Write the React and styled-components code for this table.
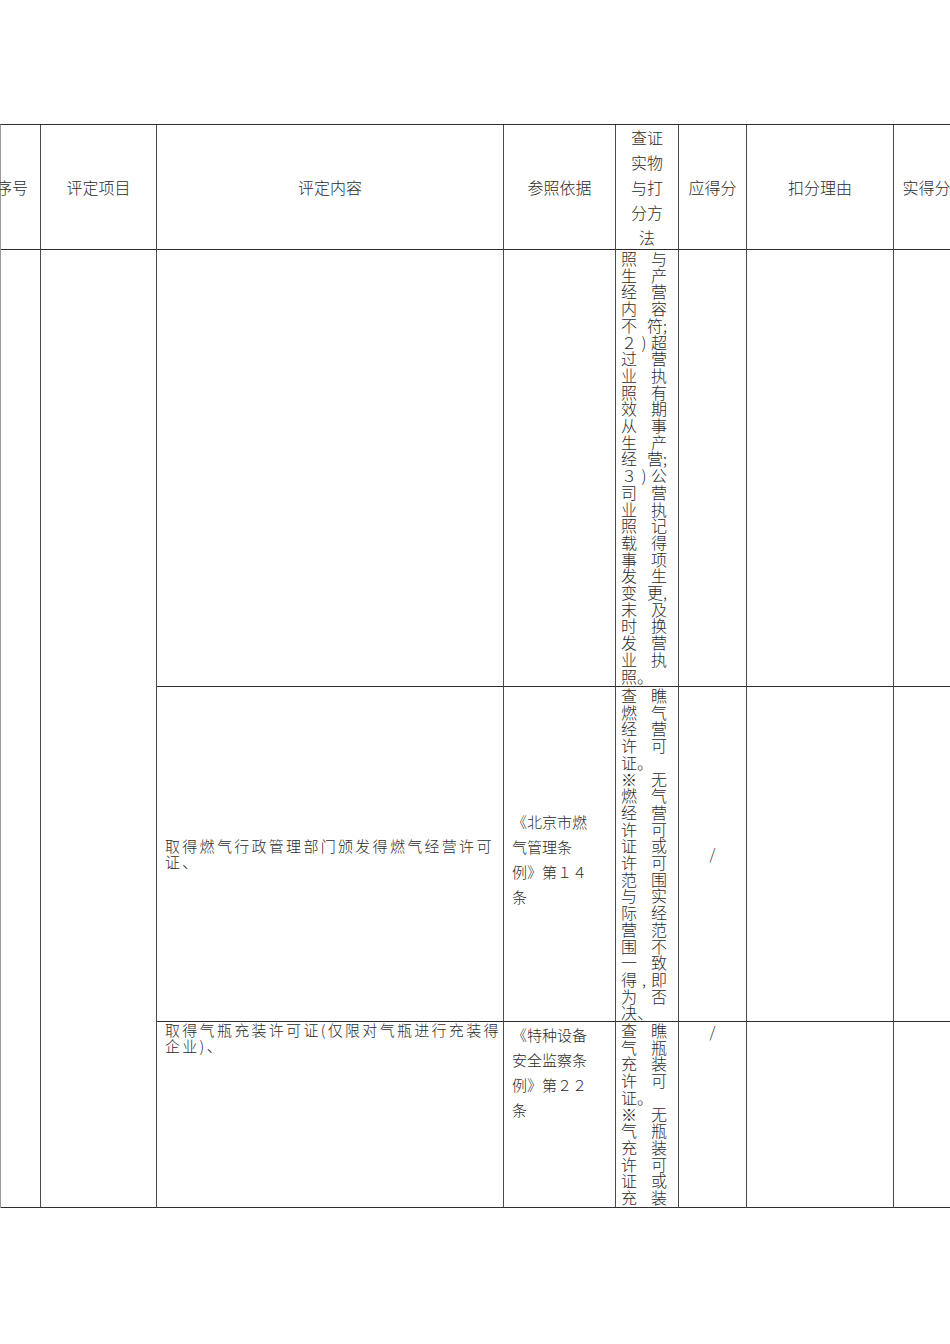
import React from "react";
import styled, { createGlobalStyle } from "styled-components";

const GlobalStyle = createGlobalStyle`
  html, body {
    margin: 0;
    padding: 0;
    background: #fff;
  }
  body {
    font-family: "Noto Sans CJK SC", "Noto Sans", sans-serif;
    font-weight: 300;
    color: #2b2b2b;
  }
`;

const Page = styled.div`
  width: 950px;
  height: 1344px;
  overflow: hidden;
  padding-top: 124px;
  box-sizing: border-box;
`;

const Sheet = styled.div`
  display: grid;
  grid-template-columns: 40px 116px 347px 112px 63px 68px 147px 66px;
  grid-template-rows: 125px 437px 335px 186px;
  width: max-content;
  border-top: 1px solid #2e2e2e;
  border-left: 1px solid #9a9a9a;
`;

const Cell = styled.div`
  box-sizing: border-box;
  min-width: 0;
  display: flex;
  align-items: ${(p) => p.$align || "flex-start"};
  justify-content: ${(p) => p.$justify || "flex-start"};
  grid-row: ${(p) => (p.$span ? `span ${p.$span}` : "auto")};
  border-right: 1px solid #4a4a4a;
  border-bottom: 1px solid #2e2e2e;
`;

const HeadCell = styled(Cell)`
  align-items: center;
  justify-content: ${(p) => p.$justify || "center"};
  padding-right: ${(p) => p.$padRight || 0}px;
  font-size: 16px;
  line-height: 25px;
  text-align: center;
  white-space: nowrap;
`;

const ItemText = styled.div`
  width: 100%;
  padding: 0 0 0 8px;
  font-size: 15px;
  letter-spacing: 2.3px;
  line-height: 16px;
`;

const RefText = styled.div`
  width: 100%;
  padding: ${(p) => (p.$middle ? "10px" : "0")} 22px 0 8px;
  font-size: 15px;
  line-height: 25px;
`;

const CheckText = styled.div`
  width: 100%;
  padding: 0 11px 0 5px;
  font-size: 16px;
  line-height: 16.7px;
`;

const CheckLine = styled.div`
  display: flex;
  justify-content: space-between;
  white-space: nowrap;
`;

const Score = styled.div`
  width: 100%;
  text-align: center;
  font-size: 15px;
  line-height: 20px;
`;

const rows = [
  {
    item: "",
    ref: "",
    score: "",
    middle: false,
    check: [
      ["照", "与"], ["生", "产"], ["经", "营"], ["内", "容"], ["不", "符;"],
      ["２", ")", "超"], ["过", "营"], ["业", "执"], ["照", "有"], ["效", "期"],
      ["从", "事"], ["生", "产"], ["经", "营;"], ["３", ")", "公"], ["司", "营"],
      ["业", "执"], ["照", "记"], ["载", "得"], ["事", "项"], ["发", "生"],
      ["变", "更,"], ["末", "及"], ["时", "换"], ["发", "营"], ["业", "执"],
      ["照。"],
    ],
  },
  {
    item: "取得燃气行政管理部门颁发得燃气经营许可证、",
    ref: "《北京市燃气管理条例》第１４条",
    score: "/",
    middle: true,
    check: [
      ["查", "瞧"], ["燃", "气"], ["经", "营"], ["许", "可"], ["证。"],
      ["※", "无"], ["燃", "气"], ["经", "营"], ["许", "可"], ["证", "或"],
      ["许", "可"], ["范", "围"], ["与", "实"], ["际", "经"], ["营", "范"],
      ["围", "不"], ["一", "致"], ["得", ",", "即"], ["为", "否"], ["决、"],
    ],
  },
  {
    item: "取得气瓶充装许可证(仅限对气瓶进行充装得企业)、",
    ref: "《特种设备安全监察条例》第２２条",
    score: "/",
    middle: false,
    check: [
      ["查", "瞧"], ["气", "瓶"], ["充", "装"], ["许", "可"], ["证。"],
      ["※", "无"], ["气", "瓶"], ["充", "装"], ["许", "可"], ["证", "或"],
      ["充", "装"],
    ],
  },
];

const App = () => {
  return (
    <Page>
      <GlobalStyle />
      <Sheet>
        <HeadCell $justify="flex-end" $padRight={12}>序号</HeadCell>
        <HeadCell>评定项目</HeadCell>
        <HeadCell>评定内容</HeadCell>
        <HeadCell>参照依据</HeadCell>
        <HeadCell>
          <div>
            查证<br />实物<br />与打<br />分方<br />法
          </div>
        </HeadCell>
        <HeadCell>应得分</HeadCell>
        <HeadCell>扣分理由</HeadCell>
        <HeadCell>实得分</HeadCell>

        <Cell $span={3} />
        <Cell $span={3} />
        {rows.map((row, i) => {
          const align = row.middle ? "center" : "flex-start";
          return (
            <React.Fragment key={i}>
              <Cell $align={align}>
                {row.item && <ItemText>{row.item}</ItemText>}
              </Cell>
              <Cell $align={align}>
                {row.ref && <RefText $middle={row.middle}>{row.ref}</RefText>}
              </Cell>
              <Cell>
                <CheckText>
                  {row.check.map((line, j) => (
                    <CheckLine key={j}>
                      {line.map((t, k) => (
                        <span key={k}>{t}</span>
                      ))}
                    </CheckLine>
                  ))}
                </CheckText>
              </Cell>
              <Cell $align={align}>
                {row.score && <Score>{row.score}</Score>}
              </Cell>
              <Cell />
              <Cell />
            </React.Fragment>
          );
        })}
      </Sheet>
    </Page>
  );
};

export default App;
